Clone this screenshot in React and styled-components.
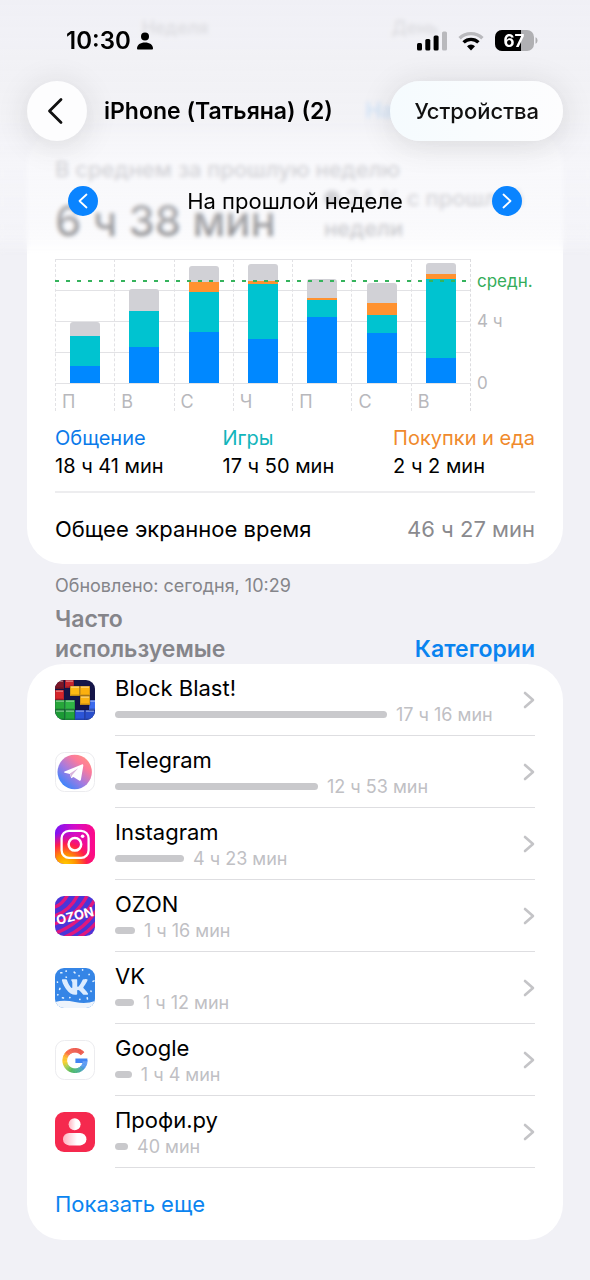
import React from 'react'
import styled, { createGlobalStyle } from 'styled-components'
import { FaVk } from 'react-icons/fa'

const HOUR = 60
const CHART_MAX = 8 * HOUR
const AVERAGE = 398

// minutes per category, from the bottom of the bar to the top
const days = [
  { day: 'П', social: 66, games: 116, shopping: 0, other: 56 },
  { day: 'В', social: 139, games: 140, shopping: 0, other: 85 },
  { day: 'С', social: 198, games: 154, shopping: 39, other: 62 },
  { day: 'Ч', social: 170, games: 213, shopping: 12, other: 66 },
  { day: 'П', social: 255, games: 67, shopping: 8, other: 73 },
  { day: 'С', social: 194, games: 68, shopping: 47, other: 79 },
  { day: 'В', social: 98, games: 304, shopping: 21, other: 43 },
]

const categories = [
  { name: 'Общение', time: '18 ч 41 мин', color: '#0a7aea' },
  { name: 'Игры', time: '17 ч 50 мин', color: '#12b5bb' },
  { name: 'Покупки и еда', time: '2 ч 2 мин', color: '#f08a2c' },
]

const BlockBlastIcon = () => {
  const cells = [
    [0, 0, 9, 9, '#7d1626'],
    [10, 0, 9, 8, '#c8252c'],
    [0, 10, 9, 10, '#d6262b'],
    [0, 20, 10, 10, '#27a63a'],
    [10, 20, 10, 10, '#2fb545'],
    [0, 30, 10, 10, '#1c9a35'],
    [10, 30, 10, 10, '#23a53c'],
    [20, 30, 10, 10, '#2c55d8'],
    [30, 30, 10, 10, '#2a4fcb'],
    [34, 20, 10, 10, '#3b6bee'],
    [15, 6, 10, 10, '#fdb913'],
    [25, 6, 10, 10, '#fcb00f'],
    [25, 16, 10, 9, '#fbb212'],
  ]
  return (
    <AppIcon viewBox="0 0 40 40" aria-hidden="true">
      <clipPath id="blast-clip"><rect width="40" height="40" rx="9" /></clipPath>
      <g clipPath="url(#blast-clip)">
        <rect width="40" height="40" fill="#151548" />
        {cells.map(([x, y, w, h, fill]) => (
          <g key={`${x}-${y}`}>
            <rect x={x} y={y} width={w} height={h} fill={fill} stroke="#12123a" strokeOpacity=".45" strokeWidth=".7" />
            <path d={`M${x + 1} ${y + 1.2}h${w - 2}`} stroke="#fff" strokeOpacity=".45" strokeWidth="1.2" />
            <path d={`M${x + 1} ${y + h - 1}h${w - 2}`} stroke="#000" strokeOpacity=".2" strokeWidth="1.2" />
          </g>
        ))}
      </g>
    </AppIcon>
  )
}

const TelegramIcon = () => (
  <AppIcon viewBox="0 0 40 40" aria-hidden="true">
    <linearGradient id="tg" x1="0.1" y1="0.9" x2="0.8" y2="0.1">
      <stop offset="0" stopColor="#2f86ff" />
      <stop offset=".45" stopColor="#a47be0" />
      <stop offset=".8" stopColor="#fb7a9c" />
      <stop offset="1" stopColor="#ff8a8a" />
    </linearGradient>
    <rect x=".5" y=".5" width="39" height="39" rx="9" fill="#fff" stroke="#ececef" />
    <circle cx="19.7" cy="20" r="17.2" fill="url(#tg)" />
    <path
      d="M9.6 19.6 26.8 12.4c.9-.4 1.7.2 1.5 1.3l-2.4 14c-.2 1-1 1.3-1.8.8l-5.6-3.5-2.3 1.2-1.3-4.2-5.2-1.2c-.8-.3-.8-.8-.1-1.2z"
      fill="#fff"
    />
    <path d="M16.2 25.3l-1.3-3.8 8.2-5.3-5.7 6.6z" fill="#d9b3dc" />
  </AppIcon>
)

const InstagramIcon = () => (
  <AppIcon viewBox="0 0 40 40" aria-hidden="true">
    <linearGradient id="ig-base" x1="0" y1="0" x2="1" y2="0">
      <stop offset="0" stopColor="#7a14f5" />
      <stop offset=".5" stopColor="#d40cc8" />
      <stop offset="1" stopColor="#ff0a86" />
    </linearGradient>
    <radialGradient id="ig-warm" cx=".25" cy="1.05" r="1">
      <stop offset="0" stopColor="#ffd400" />
      <stop offset=".28" stopColor="#ff9300" />
      <stop offset=".55" stopColor="#ff1f4b" />
      <stop offset=".85" stopColor="#ff0a86" stopOpacity="0" />
    </radialGradient>
    <rect width="40" height="40" rx="9" fill="url(#ig-base)" />
    <rect width="40" height="40" rx="9" fill="url(#ig-warm)" />
    <rect x="6.6" y="6.8" width="27" height="27" rx="7.5" fill="none" stroke="#fff" strokeWidth="2.3" />
    <circle cx="19.9" cy="20.3" r="6.3" fill="none" stroke="#fff" strokeWidth="2.5" />
    <circle cx="27.6" cy="12.2" r="1.8" fill="#fff" />
  </AppIcon>
)

const OzonIcon = () => (
  <AppIcon viewBox="0 0 40 40" aria-hidden="true">
    <clipPath id="ozon-clip"><rect width="40" height="40" rx="9" /></clipPath>
    <g clipPath="url(#ozon-clip)">
      <rect width="40" height="40" fill="#4a35d8" />
      <g fill="none" stroke="#e0187e" strokeWidth="3.4">
        <path d="M-4 12Q8 10 14-4" />
        <path d="M-4 21Q16 16 24-4" />
        <path d="M-4 29Q22 22 34-4" />
        <path d="M-2 38Q28 28 43-2" />
        <path d="M8 42Q32 32 44 10" />
        <path d="M18 44Q36 36 46 20" />
        <path d="M28 46Q38 40 46 31" />
      </g>
      <text
        x="20"
        y="24.5"
        textAnchor="middle"
        transform="rotate(-14 20 20)"
        fill="#fff"
        fontFamily="Inter, sans-serif"
        fontWeight="700"
        fontSize="13"
      >
        OZON
      </text>
    </g>
  </AppIcon>
)

const VkIcon = () => {
  const flakes = [[5, 4], [11, 8], [3, 13], [6, 20], [4, 27], [12, 4], [20, 6], [27, 3], [33, 7], [37, 13], [30, 11], [36, 22], [33, 29], [26, 31], [16, 30], [9, 31], [24, 9]]
  return (
    <AppIcon viewBox="0 0 40 40" aria-hidden="true">
      <clipPath id="vk-clip"><rect width="40" height="40" rx="9" /></clipPath>
      <g clipPath="url(#vk-clip)">
        <rect width="40" height="40" fill="#3585e6" />
        {flakes.map(([x, y], i) => (
          <rect
            key={i}
            x={x}
            y={y}
            width={i % 3 ? 1.8 : 2.6}
            height="1.6"
            rx=".7"
            fill="#e4f2ff"
            transform={`rotate(${i * 37} ${x} ${y})`}
          />
        ))}
        <path d="M0 34Q9 31.5 20 34T40 33V40H0z" fill="#eef4fc" />
        <FaVk x={6} y={5} size={28} color="#dcecff" />
      </g>
    </AppIcon>
  )
}

// the ring runs clockwise from the right end of the crossbar
const googleRing = [
  [0, 66, 133, 244], [35, 60, 140, 235], [70, 45, 165, 130], [105, 50, 175, 80],
  [140, 140, 195, 50], [170, 250, 200, 10], [200, 252, 170, 10], [225, 250, 90, 50],
  [260, 234, 67, 53], [318, 234, 67, 53],
]

const GoogleIcon = () => {
  const point = (deg) => {
    const a = (deg * Math.PI) / 180
    return `${20 + 10.2 * Math.cos(a)} ${20.5 + 10.2 * Math.sin(a)}`
  }
  const arcs = []
  for (let deg = 0; deg < 318; deg += 3) {
    const i = googleRing.findIndex((stop) => stop[0] > deg) - 1
    const [from, ...a] = googleRing[i]
    const [to, ...b] = googleRing[i + 1]
    const t = (deg - from) / (to - from)
    const rgb = a.map((v, n) => Math.round(v + (b[n] - v) * t))
    arcs.push(
      <path
        key={deg}
        d={`M${point(deg)}A10.2 10.2 0 0 1 ${point(Math.min(deg + 3.6, 318))}`}
        stroke={`rgb(${rgb.join(',')})`}
        strokeWidth="4.6"
        fill="none"
      />
    )
  }
  return (
    <AppIcon viewBox="0 0 40 40" aria-hidden="true">
      <rect x=".5" y=".5" width="39" height="39" rx="9" fill="#fff" stroke="#ececef" />
      {arcs}
      <path d="M20.4 18.4H32.4V21H27.9V23H20.4z" fill="#4285f4" />
    </AppIcon>
  )
}

const ProfiIcon = () => (
  <AppIcon viewBox="0 0 40 40" aria-hidden="true">
    <linearGradient id="profi" x1="0" y1="0" x2="1" y2="0">
      <stop offset="0" stopColor="#ffb3c0" />
      <stop offset=".6" stopColor="#fff" />
    </linearGradient>
    <rect width="40" height="40" rx="9" fill="#f5294e" />
    <circle cx="19.6" cy="12.3" r="6" fill="url(#profi)" />
    <rect x="8" y="21" width="23.4" height="12.4" rx="6.2" fill="url(#profi)" />
  </AppIcon>
)

const apps = [
  { name: 'Block Blast!', time: '17 ч 16 мин', minutes: 1036, Icon: BlockBlastIcon },
  { name: 'Telegram', time: '12 ч 53 мин', minutes: 773, Icon: TelegramIcon },
  { name: 'Instagram', time: '4 ч 23 мин', minutes: 263, Icon: InstagramIcon },
  { name: 'OZON', time: '1 ч 16 мин', minutes: 76, Icon: OzonIcon },
  { name: 'VK', time: '1 ч 12 мин', minutes: 72, Icon: VkIcon },
  { name: 'Google', time: '1 ч 4 мин', minutes: 64, Icon: GoogleIcon },
  { name: 'Профи.ру', time: '40 мин', minutes: 40, Icon: ProfiIcon },
]

const StatusBar = () => (
  <StatusRow>
    <StatusGroup>
      <Clock>10:30</Clock>
      <svg width="16" height="18" viewBox="0 0 16 18" aria-hidden="true">
        <circle cx="8" cy="4.6" r="4" />
        <path d="M0 16.5C0 12.6 3.4 10.4 8 10.4s8 2.2 8 6.1c0 .6-.3.9-.9.9H.9c-.6 0-.9-.3-.9-.9z" />
      </svg>
    </StatusGroup>
    <StatusGroup $gap="11px">
      <svg width="30" height="20" viewBox="0 0 30 20" aria-hidden="true">
        <rect x="0" y="12" width="5" height="7.5" rx="1.5" />
        <rect x="8.3" y="8" width="5" height="11.5" rx="1.5" />
        <rect x="16.6" y="4.5" width="5" height="15" rx="1.5" />
        <rect x="25" y="0.5" width="5" height="19" rx="1.5" fill="#b9b9bd" />
      </svg>
      <svg width="26" height="20" viewBox="0 0 26 20" fill="none" aria-hidden="true">
        <path d="M1.6 7.2a16.4 16.4 0 0 1 22.8 0" stroke="#b9b9bd" strokeWidth="3.4" />
        <path d="M5.6 11.4a10.6 10.6 0 0 1 14.8 0" stroke="#000" strokeWidth="3.4" />
        <path d="M9 15.2a5.8 5.8 0 0 1 8 0L13 19.4z" fill="#000" />
      </svg>
      <svg width="43" height="22" viewBox="0 0 43 22" aria-label="67">
        <clipPath id="battery"><rect width="39" height="21" rx="7" /></clipPath>
        <g clipPath="url(#battery)">
          <rect width="39" height="21" fill="#b0b0b3" />
          <rect width="26" height="21" />
        </g>
        <path d="M40.5 7.2c1.3.5 2 1.8 2 3.3s-.7 2.8-2 3.3z" fill="#b0b0b3" />
        <text x="19" y="17" textAnchor="middle" fill="#fff" fontFamily="Inter, sans-serif" fontWeight="700" fontSize="17">67</text>
      </svg>
    </StatusGroup>
  </StatusRow>
)

const UsageChart = () => (
  <Chart>
    <Plot>
      {days.map((d, i) => (
        <DayColumn key={i}>
          <BarArea>
            <Segment $color="#d1d1d6" style={{ height: `${(d.other / CHART_MAX) * 100}%` }} />
            <Segment $color="#ff9230" style={{ height: `${(d.shopping / CHART_MAX) * 100}%` }} />
            <Segment $color="#00c3d0" style={{ height: `${(d.games / CHART_MAX) * 100}%` }} />
            <Segment $color="#0088ff" style={{ height: `${(d.social / CHART_MAX) * 100}%` }} />
          </BarArea>
          <DayName>{d.day}</DayName>
        </DayColumn>
      ))}
      <AverageLine style={{ top: `${Math.round(124 * (1 - AVERAGE / CHART_MAX))}px` }} />
    </Plot>
    <Axis>
      <AverageLabel>средн.</AverageLabel>
      <span>4 ч</span>
      <span>0</span>
    </Axis>
  </Chart>
)

const AppRow = ({ app }) => {
  const { name, time, minutes, Icon } = app
  return (
    <li>
      <RowLink href="#">
        <Icon />
        <RowBody>
          <RowText>
            <AppName>{name}</AppName>
            <Usage>
              <UsageBar style={{ width: `${(minutes / 1036) * 68}%` }} />
              <UsageTime>{time}</UsageTime>
            </Usage>
          </RowText>
          <svg width="12" height="18" viewBox="0 0 12 18" fill="none" aria-hidden="true">
            <path d="M2 2l8 7-8 7" stroke="#c4c4c7" strokeWidth="2.6" strokeLinecap="round" strokeLinejoin="round" />
          </svg>
        </RowBody>
      </RowLink>
    </li>
  )
}

const App = () => {
  return (
    <>
      <GlobalStyle />
      <Page>
        <Header>
          <StatusBar />
          <NavBar>
            <BackButton aria-label="Назад">
              <svg width="16" height="28" viewBox="0 0 16 28" fill="none" aria-hidden="true">
                <path d="M14 2.5 2.5 14 14 25.5" stroke="#111" strokeWidth="2.8" strokeLinecap="round" strokeLinejoin="round" />
              </svg>
            </BackButton>
            <NavTitle>iPhone (Татьяна) (2)</NavTitle>
            <DevicesButton>Устройства</DevicesButton>
          </NavBar>
          <WeekBar>
            <RoundButton aria-label="Предыдущая неделя">
              <svg width="10" height="16" viewBox="0 0 10 16" fill="none" aria-hidden="true">
                <path d="M8.5 1.5 1.5 8l7 6.5" stroke="#fff" strokeWidth="1.8" strokeLinecap="round" strokeLinejoin="round" />
              </svg>
            </RoundButton>
            <WeekTitle>На прошлой неделе</WeekTitle>
            <RoundButton aria-label="Следующая неделя">
              <svg width="10" height="16" viewBox="0 0 10 16" fill="none" aria-hidden="true">
                <path d="m1.5 1.5 7 6.5-7 6.5" stroke="#fff" strokeWidth="1.8" strokeLinecap="round" strokeLinejoin="round" />
              </svg>
            </RoundButton>
          </WeekBar>
        </Header>

        <Periods>
          <span>Неделя</span>
          <span>День</span>
        </Periods>
        <CurrentWeek>На этой неделе</CurrentWeek>

        <Card>
          <AverageTitle>В среднем за прошлую неделю</AverageTitle>
          <AverageRow>
            <AverageTime>6 ч 38 мин</AverageTime>
            <Change>
              <ChangeDot /> 24 % с прошлой недели
            </Change>
          </AverageRow>
          <UsageChart />
          <Legend>
            {categories.map((c) => (
              <div key={c.name}>
                <LegendName $color={c.color}>{c.name}</LegendName>
                <LegendTime>{c.time}</LegendTime>
              </div>
            ))}
          </Legend>
          <Total>
            <span>Общее экранное время</span>
            <TotalTime>46 ч 27 мин</TotalTime>
          </Total>
        </Card>
        <Updated>Обновлено: сегодня, 10:29</Updated>

        <SectionHead>
          <SectionTitle>Часто используемые</SectionTitle>
          <SectionLink href="#">Категории</SectionLink>
        </SectionHead>
        <Card>
          <List>
            {apps.map((app) => (
              <AppRow key={app.name} app={app} />
            ))}
          </List>
          <MoreButton>Показать еще</MoreButton>
        </Card>
      </Page>
    </>
  )
}

export default App

const GlobalStyle = createGlobalStyle`
  * {
    box-sizing: border-box;
  }
  body {
    margin: 0;
    background: #f1f1f6;
    font-family: Inter, "Noto Sans", sans-serif;
    color: #000;
  }
  button {
    font-family: inherit;
    border: none;
    padding: 0;
    cursor: pointer;
  }
  svg {
    display: block;
    flex-shrink: 0;
  }
`
const Page = styled.main`
  position: relative;
  padding: 0 27px 40px;
`
const Header = styled.header`
  position: absolute;
  z-index: 1;
  top: 0;
  left: 0;
  right: 0;
  height: 256px;
  background: linear-gradient(
    rgba(240, 240, 245, 0.92) 0,
    rgba(242, 242, 246, 0.88) 120px,
    rgba(246, 246, 250, 0.76) 160px,
    rgba(246, 246, 250, 0.6) 225px,
    rgba(250, 250, 252, 0.4) 256px
  );
  backdrop-filter: blur(2px);
  mask-image: linear-gradient(#000 238px, transparent 256px);
`
const StatusRow = styled.div`
  display: flex;
  align-items: center;
  justify-content: space-between;
  height: 81px;
  padding: 0 52px 0 66px;
`
const StatusGroup = styled.div`
  display: flex;
  align-items: center;
  gap: ${(props) => props.$gap || '6px'};
`
const Clock = styled.span`
  font-size: 24px;
  font-weight: 600;
`
const NavBar = styled.nav`
  display: flex;
  align-items: center;
  height: 60px;
  padding: 0 27px;
`
const BackButton = styled.button`
  display: flex;
  align-items: center;
  justify-content: center;
  width: 60px;
  height: 60px;
  padding-right: 4px;
  border-radius: 30px;
  background: #fdfdfe;
  box-shadow: 0 4px 32px rgba(0, 0, 0, 0.13);
`
const NavTitle = styled.h1`
  flex: 1;
  margin: 0 0 0 17px;
  font-size: 23px;
  font-weight: 600;
`
const DevicesButton = styled.button`
  height: 60px;
  padding: 0 24px;
  border-radius: 30px;
  background: linear-gradient(90deg, #f5fbfe, #fdfdfe);
  box-shadow: 0 4px 32px rgba(0, 0, 0, 0.13);
  font-size: 22px;
  font-weight: 500;
  color: #111;
`
const WeekBar = styled.div`
  display: flex;
  align-items: center;
  justify-content: space-between;
  height: 120px;
  padding: 0 68px;
`
const RoundButton = styled.button`
  display: flex;
  align-items: center;
  justify-content: center;
  width: 30px;
  height: 30px;
  border-radius: 15px;
  background: #0a84ff;
`
const WeekTitle = styled.h2`
  margin: 0;
  font-size: 22px;
  font-weight: 400;
`
const Periods = styled.div`
  display: grid;
  grid-template-columns: 1fr 1fr;
  height: 56px;
  padding: 0 28px;
  line-height: 56px;
  text-align: center;
  font-size: 18px;
  font-weight: 500;
`
const CurrentWeek = styled.div`
  height: 75px;
  padding: 40px 28px 0;
  line-height: 28px;
  text-align: right;
  font-size: 22px;
  font-weight: 600;
  color: #0088ff;
`
const Card = styled.section`
  padding: 0 28px;
  border-radius: 36px;
  background: #fff;
`
const AverageTitle = styled.div`
  padding-top: 24px;
  line-height: 28px;
  font-size: 22px;
  font-weight: 500;
  color: #6e6e73;
`
const AverageRow = styled.div`
  display: flex;
  gap: 48px;
  height: 76px;
`
const AverageTime = styled.div`
  flex-shrink: 0;
  line-height: 76px;
  font-size: 42px;
  font-weight: 500;
  color: #1c1c1e;
`
const Change = styled.div`
  line-height: 30px;
  font-size: 22px;
  font-weight: 500;
  color: #8e8e93;
`
const ChangeDot = styled.span`
  display: inline-block;
  width: 16px;
  height: 16px;
  border-radius: 8px;
  background: #8e8e93;
`
const Chart = styled.div`
  display: flex;
`
const Plot = styled.div`
  position: relative;
  flex: 1;
  display: flex;
  height: 152px;
  border-right: 1px dashed #dcdcdf;
  background: repeating-linear-gradient(#e2e2e5 0 1px, transparent 1px 31px) 0 0 / 100% 125px no-repeat;
`
const DayColumn = styled.div`
  flex: 1;
  border-left: 1px dashed #e2e2e5;
`
const BarArea = styled.div`
  display: flex;
  flex-direction: column;
  justify-content: flex-end;
  align-items: center;
  height: 124px;
`
const Segment = styled.div`
  width: 30px;
  background: ${(props) => props.$color};
  &:first-child {
    border-radius: 3px 3px 0 0;
  }
`
const DayName = styled.div`
  padding: 5px 0 0 6px;
  line-height: 28px;
  font-size: 18px;
  color: #b8b8bc;
`
const AverageLine = styled.div`
  position: absolute;
  left: 0;
  right: 0;
  height: 2px;
  background: repeating-linear-gradient(90deg, #35b35c 0 4px, transparent 4px 11px);
`
const Axis = styled.div`
  display: flex;
  flex-direction: column;
  width: 64px;
  padding: 9px 0 0 6px;
  line-height: 26px;
  font-size: 17px;
  color: #b8b8bc;
  span + span {
    margin-top: 14px;
  }
  span:last-child {
    margin-top: 36px;
  }
`
const AverageLabel = styled.span`
  color: #34ad5a;
`
const Legend = styled.div`
  display: flex;
  justify-content: space-between;
  padding: 13px 0 11px;
  border-bottom: 2px solid #ededef;
`
const LegendName = styled.div`
  line-height: 28px;
  font-size: 20px;
  color: ${(props) => props.$color};
`
const LegendTime = styled.div`
  line-height: 28px;
  font-size: 20px;
`
const Total = styled.div`
  display: flex;
  justify-content: space-between;
  align-items: center;
  height: 71px;
  font-size: 22px;
`
const TotalTime = styled.span`
  color: #8a8a8e;
`
const Updated = styled.p`
  margin: 0;
  padding: 8px 28px 4px;
  line-height: 28px;
  font-size: 18px;
  color: #85858a;
`
const SectionHead = styled.div`
  display: flex;
  justify-content: space-between;
  align-items: flex-end;
  padding: 0 28px;
  line-height: 30px;
  font-size: 23px;
  font-weight: 600;
`
const SectionTitle = styled.h2`
  width: min-content;
  margin: 0;
  font-size: 23px;
  font-weight: 600;
  color: #85858a;
`
const SectionLink = styled.a`
  color: #0a84f0;
  text-decoration: none;
`
const List = styled.ul`
  margin: 0;
  padding: 0;
  list-style: none;
`
const RowLink = styled.a`
  display: flex;
  align-items: center;
  gap: 20px;
  height: 72px;
  color: inherit;
  text-decoration: none;
`
const AppIcon = styled.svg`
  width: 40px;
  height: 40px;
`
const RowBody = styled.div`
  flex: 1;
  display: flex;
  align-items: center;
  gap: 8px;
  height: 72px;
  border-bottom: 1px solid #dedee1;
`
const RowText = styled.div`
  flex: 1;
`
const AppName = styled.div`
  line-height: 30px;
  font-size: 22px;
`
const Usage = styled.div`
  display: flex;
  align-items: center;
  gap: 9px;
`
const UsageBar = styled.div`
  min-width: 13px;
  height: 7px;
  border-radius: 4px;
  background: #c9c9cc;
`
const UsageTime = styled.span`
  line-height: 24px;
  font-size: 18px;
  color: #c0c0c4;
`
const MoreButton = styled.button`
  height: 72px;
  background: none;
  font-size: 22px;
  color: #0a84f0;
`
